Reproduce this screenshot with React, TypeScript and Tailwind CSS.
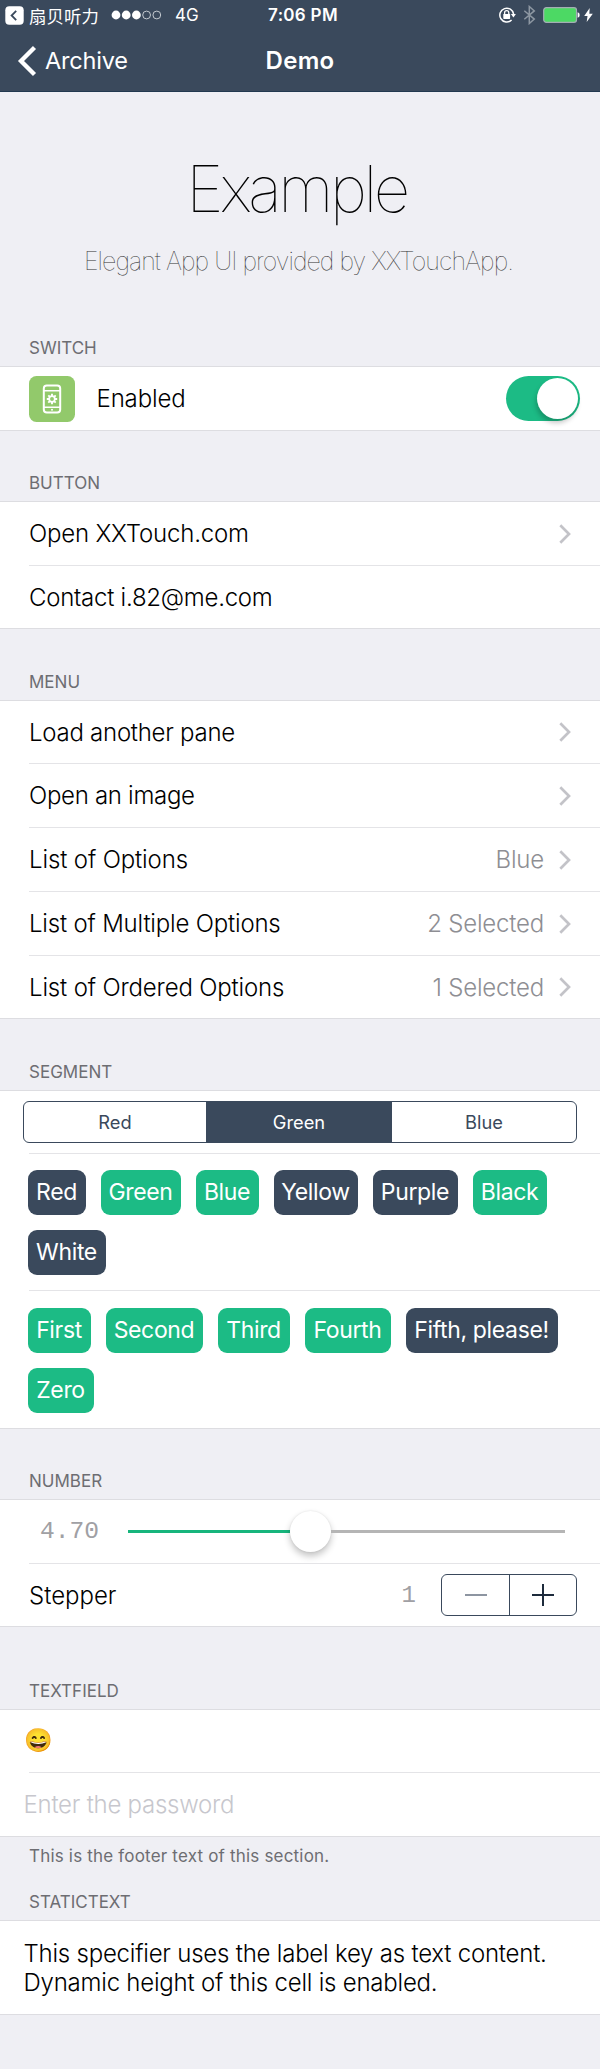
import type { ReactNode } from "react";

function StatusBar() {
  return (
    <div className="grid h-[29px] grid-cols-[1fr_auto_1fr] items-center pr-[7px] pl-[5px] text-[17px] leading-[29px]">
      <div className="flex items-center">
        <svg className="h-[19px] w-[19px]" viewBox="0 0 19 19">
          <rect x="0.3" y="0.3" width="18.4" height="18.4" rx="4" fill="#fff" />
          <path d="M11.2 4.9 6.6 9.5l4.6 4.6" fill="none" stroke="#3a495c" strokeWidth="1.8" />
        </svg>
        <span className="ml-[5px] font-['Noto_Sans_CJK_SC',sans-serif] text-[17.4px] font-normal tracking-[0.1px]">扇贝听力</span>
        <svg className="ml-[12px] h-[10px] w-[51px]" viewBox="0 0 51 10">
          <circle cx="5" cy="5" r="4.4" fill="#fff" />
          <circle cx="15.2" cy="5" r="4.4" fill="#fff" />
          <circle cx="25.4" cy="5" r="4.4" fill="#fff" />
          <circle cx="35.6" cy="5" r="3.9" fill="none" stroke="#c3c9d0" strokeWidth="1" />
          <circle cx="45.8" cy="5" r="3.9" fill="none" stroke="#c3c9d0" strokeWidth="1" />
        </svg>
        <span className="ml-[13px] pt-px">4G</span>
      </div>
      <span className="pt-px pl-[8px] font-semibold tracking-[0.3px]">7:06 PM</span>
      <div className="flex items-center justify-end">
        <svg className="h-[18px] w-[18px]" viewBox="0 0 18 18">
          <path d="M15.6 8.2A6.9 6.9 0 1 0 13.6 14" fill="none" stroke="#fff" strokeWidth="1.5" />
          <path d="M12.9 8h5l-2.5 3.4z" fill="#fff" />
          <rect x="5.3" y="8" width="6.8" height="4.9" rx="0.6" fill="#fff" />
          <path d="M6.6 8.4V6.7a2.1 2.1 0 0 1 4.2 0v1.7" fill="none" stroke="#fff" strokeWidth="1.3" />
        </svg>
        <svg className="ml-[7px] h-[20px] w-[13px]" viewBox="0 0 13 20">
          <path d="m1.3 5.7 10 8.4-5 4.4V1.5l5 4.4-10 8.4" fill="none" stroke="#8d97a2" strokeWidth="1.5" />
        </svg>
        <svg className="ml-[7px] h-[16px] w-[37px]" viewBox="0 0 37 16">
          <rect x="0.7" y="0.7" width="32.8" height="14.6" rx="2.6" fill="#4cd964" stroke="#a4aeb4" strokeWidth="1.2" />
          <path d="M34.6 5.2c1.6.4 2 1.5 2 2.8s-.4 2.4-2 2.8z" fill="#fff" />
        </svg>
        <svg className="ml-[4px] h-[14px] w-[9px]" viewBox="0 0 9 14">
          <path d="M5.7 0 0.2 7.9h3.3L2.7 14 8.8 5.7H5.3z" fill="#fff" />
        </svg>
      </div>
    </div>
  );
}

function NavBar() {
  return (
    <div className="grid h-[62px] grid-cols-[1fr_auto_1fr] items-center px-[17px] pt-[2px] text-[24px]">
      <div className="flex items-center">
        <svg className="h-[32px] w-[20px]" viewBox="0 0 20 32">
          <path d="M17.5 2.5 4 16l13.5 13.5" fill="none" stroke="#fff" strokeWidth="4.3" />
        </svg>
        <span className="ml-[8px] text-[23.5px] tracking-[-0.2px]">Archive</span>
      </div>
      <span className="font-semibold tracking-[0.3px]">Demo</span>
    </div>
  );
}

function Heading({ className, children }: { className: string; children: ReactNode }) {
  return (
    <h2 className={`flex items-end pb-[6px] pl-[29px] text-[17px] leading-[24px] font-normal text-[#6d6d72] ${className}`}>
      {children}
    </h2>
  );
}

function Group({ children }: { children: ReactNode }) {
  return <section className="border-y border-[#dddde1] bg-white">{children}</section>;
}

function Row({ className, last, children }: { className: string; last?: boolean; children: ReactNode }) {
  return (
    <div className={`pl-[29px] ${className}`}>
      <div className={`flex h-full items-center ${last ? "" : "border-b border-[#e4e4e7]"}`}>{children}</div>
    </div>
  );
}

function Chevron() {
  return (
    <svg className="mr-[29px] ml-[15px] h-[20px] w-[12px] shrink-0" viewBox="0 0 12 20">
      <path d="m1.3 1.3 8.7 8.7-8.7 8.7" fill="none" stroke="#c3c3c8" strokeWidth="2.7" />
    </svg>
  );
}

function LinkRow({ label, value, tracking, height, last }: { label: string; value?: string; tracking: string; height: string; last?: boolean }) {
  return (
    <Row className={height} last={last}>
      <span className={`flex-1 pt-px ${tracking}`}>{label}</span>
      {value && <span className="pt-px tracking-[-0.2px] text-[#8e8e93]">{value}</span>}
      <Chevron />
    </Row>
  );
}

type ChipData = { label: string; width: string; on: boolean };

const colours: ChipData[] = [
  { label: "Red", width: "w-[58px]", on: false },
  { label: "Green", width: "w-[80px]", on: true },
  { label: "Blue", width: "w-[63px]", on: true },
  { label: "Yellow", width: "w-[84px]", on: false },
  { label: "Purple", width: "w-[85px]", on: false },
  { label: "Black", width: "w-[74px]", on: true },
  { label: "White", width: "w-[78px]", on: false },
];

const ordered: ChipData[] = [
  { label: "First", width: "w-[63px]", on: true },
  { label: "Second", width: "w-[97px]", on: true },
  { label: "Third", width: "w-[72px]", on: true },
  { label: "Fourth", width: "w-[86px]", on: true },
  { label: "Fifth, please!", width: "w-[152px]", on: false },
  { label: "Zero", width: "w-[66px]", on: true },
];

function Chips({ items }: { items: ChipData[] }) {
  return (
    <div className="-ml-[1.5px] flex w-[556px] flex-wrap gap-x-[15px] gap-y-[15px] pt-px">
      {items.map((c) => (
        <span
          key={c.label}
          className={`flex h-[45px] items-center justify-center rounded-[9px] text-[23px] font-normal tracking-[-0.35px] whitespace-nowrap text-white ${c.width} ${c.on ? "bg-[#1cbb85]" : "bg-[#3a495c]"}`}
        >
          {c.label}
        </span>
      ))}
    </div>
  );
}

export default function App() {
  return (
    <div className="flex h-[2069px] w-[600px] flex-col overflow-hidden bg-[#efeff4] font-['Inter',sans-serif] text-[24px] font-light text-black">
      <header className="h-[92px] border-b border-[#22384f] bg-[#3a495c] font-normal text-white">
        <StatusBar />
        <NavBar />
      </header>

      <div className="flex h-[200px] flex-col items-center pt-[58px] font-thin">
        <h1 className="pr-[7px] text-[63.7px] leading-[78px] tracking-[-3.5px]">Example</h1>
        <p className="mt-[18px] pr-[3px] text-[25px] leading-[30px] tracking-[-0.96px] text-[#333]">Elegant App UI provided by XXTouchApp.</p>
      </div>

      <Heading className="h-[74px]">SWITCH</Heading>
      <Group>
        <Row className="h-[63px]" last>
          <svg className="h-[46px] w-[46px]" viewBox="0 0 46 46">
            <rect width="46" height="46" rx="7.5" fill="#92c96b" />
            <rect x="14.8" y="9.5" width="16.4" height="27" rx="3" fill="none" stroke="#fff" strokeWidth="2" />
            <path d="M15 14.8h16M15 31.2h16" stroke="#fff" strokeWidth="1.6" />
            <path d="M23 17.8v10.4M17.8 23h10.4M19.3 19.3l7.4 7.4M26.7 19.3l-7.4 7.4" stroke="#fff" strokeWidth="1.9" />
            <circle cx="23" cy="23" r="2.8" fill="#92c96b" stroke="#fff" strokeWidth="1.7" />
            <circle cx="23" cy="33.8" r="1" fill="#fff" />
          </svg>
          <span className="ml-[21.5px] flex-1 pt-px tracking-[-0.15px]">Enabled</span>
          <span className="mr-[20.5px] flex h-[45px] w-[74px] items-center justify-end rounded-full bg-[#1cbb85] pr-[2px]">
            <span className="h-[41px] w-[41px] rounded-full bg-white shadow-[-1px_4px_5px_rgba(0,0,0,0.22)]" />
          </span>
        </Row>
      </Group>

      <Heading className="h-[70px]">BUTTON</Heading>
      <Group>
        <LinkRow label="Open XXTouch.com" tracking="tracking-[-0.2px]" height="h-[64px]" />
        <Row className="h-[62px]" last>
          <span className="pt-[2px] tracking-[-0.26px]">Contact i.82@me.com</span>
        </Row>
      </Group>

      <Heading className="h-[71px]">MENU</Heading>
      <Group>
        <LinkRow label="Load another pane" tracking="tracking-[-0.26px]" height="h-[63px]" />
        <LinkRow label="Open an image" tracking="tracking-[-0.3px]" height="h-[64px]" />
        <LinkRow label="List of Options" value="Blue" tracking="tracking-[-0.13px]" height="h-[64px]" />
        <LinkRow label="List of Multiple Options" value="2 Selected" tracking="tracking-[-0.19px]" height="h-[64px]" />
        <LinkRow label="List of Ordered Options" value="1 Selected" tracking="tracking-[-0.16px]" height="h-[62px]" last />
      </Group>

      <Heading className="h-[71px]">SEGMENT</Heading>
      <Group>
        <Row className="h-[63px]">
          <div className="-ml-[6px] flex h-[42px] w-[554px] overflow-hidden rounded-[6px] border-[1.5px] border-[#3a495c] text-[18.3px] font-normal text-[#3a495c]">
            <span className="flex w-[182px] items-center justify-center pt-px">Red</span>
            <span className="flex w-[186px] items-center justify-center bg-[#3a495c] pt-px text-white">Green</span>
            <span className="flex flex-1 items-center justify-center pt-px">Blue</span>
          </div>
        </Row>
        <Row className="h-[137px]">
          <Chips items={colours} />
        </Row>
        <Row className="h-[137px]" last>
          <Chips items={ordered} />
        </Row>
      </Group>

      <Heading className="h-[70px]">NUMBER</Heading>
      <Group>
        <Row className="h-[64px]">
          <span className="ml-[11px] w-[88px] pt-px font-['Liberation_Mono',monospace] text-[24.6px] text-[#a0a0a4]">4.70</span>
          <div className="flex h-[41px] w-[437px] items-center">
            <span className="h-[3px] w-[162px] bg-[#17b57c]" />
            <span className="h-[41px] w-[41px] rounded-full bg-white shadow-[0_4px_7px_rgba(0,0,0,0.24),0_0_2px_rgba(0,0,0,0.1)]" />
            <span className="h-[3px] flex-1 bg-[#b5b5b5]" />
          </div>
        </Row>
        <Row className="h-[62px]" last>
          <span className="flex-1 pt-px">Stepper</span>
          <span className="mr-[25px] pt-px font-['Liberation_Mono',monospace] text-[24px] text-[#a0a0a4]">1</span>
          <div className="mr-[23px] flex h-[42px] w-[136px] rounded-[6px] border-[1.5px] border-[#3a495c]">
            <span className="flex w-[68px] items-center justify-center border-r border-[#3a495c]">
              <span className="h-[2px] w-[22px] bg-[#8d95a1]" />
            </span>
            <span className="flex flex-1 items-center justify-center">
              <svg className="h-[22px] w-[22px]" viewBox="0 0 22 22">
                <path d="M0 11h22M11 0v22" stroke="#1d2b3c" strokeWidth="2" />
              </svg>
            </span>
          </div>
        </Row>
      </Group>

      <Heading className="h-[82px]">TEXTFIELD</Heading>
      <Group>
        <Row className="h-[63px]">
          <span className="-ml-[5px] pb-[2px] text-[23px] font-normal">😄</span>
        </Row>
        <Row className="h-[63px]" last>
          <span className="-ml-[5.5px] tracking-[-0.25px] text-[#c7c7cd]">Enter the password</span>
        </Row>
      </Group>
      <p className="h-[36px] pt-[7px] pl-[29px] text-[17px] leading-[24px] font-normal tracking-[0.19px] text-[#6d6d72]">
        This is the footer text of this section.
      </p>

      <Heading className="h-[47px]">STATICTEXT</Heading>
      <Group>
        <div className="flex h-[93px] items-center pl-[23.5px] leading-[29px] tracking-[-0.22px]">
          <p>
            This specifier uses the label key as text content.
            <br />
            Dynamic height of this cell is enabled.
          </p>
        </div>
      </Group>
    </div>
  );
}
